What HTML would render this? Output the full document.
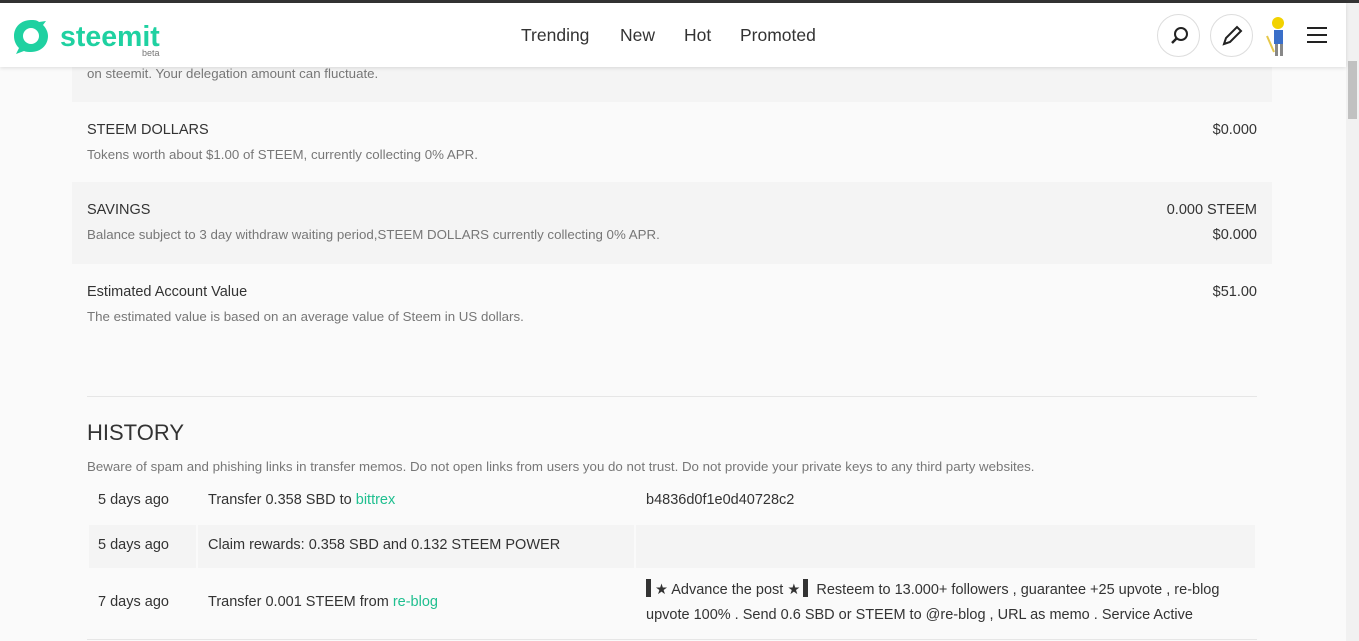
<!DOCTYPE html>
<html><head><meta charset="utf-8"><style>
*{margin:0;padding:0;box-sizing:border-box}
body{width:1359px;height:641px;overflow:hidden;background:#fafafa;font-family:"Liberation Sans",sans-serif;color:#333;position:relative}
.topbar{position:absolute;top:0;left:0;width:1359px;height:3px;background:#333}
.hdr{position:absolute;top:3px;left:0;width:1346px;height:64px;background:#fff;box-shadow:0 1px 4px rgba(0,0,0,.12);z-index:5}
.sb{position:absolute;top:3px;right:0;width:13px;height:638px;background:#f1f1f1}
.sb div{position:absolute;top:58px;left:2px;width:9px;height:58px;background:#c1c1c1}
.logo{position:absolute;left:12px;top:15px}
.brand{position:absolute;left:60px;top:18px;font-size:28.5px;font-weight:bold;color:#1fd1a1}
.beta{position:absolute;left:142px;top:45px;font-size:9px;color:#777}
.nav{position:absolute;top:22px;font-size:17.5px;color:#333}
.circ{position:absolute;top:11px;width:43px;height:43px;border:1px solid #ddd;border-radius:50%}
.row{position:absolute;left:72px;width:1200px}
.t{position:absolute;left:15px;font-size:14.5px;color:#333}
.s{position:absolute;left:15px;font-size:13.3px;color:#777}
.r{position:absolute;right:15px;font-size:14.5px;color:#333}
.cell{position:absolute;font-size:14.5px;color:#333}
a{color:#1fbf8f;text-decoration:none}
</style></head><body>
<div class="topbar"></div>
<div class="row" style="top:60px;height:42px;background:#f4f4f4"><div class="s" style="top:6px">on steemit. Your delegation amount can fluctuate.</div></div>
<div class="row" style="top:102px;height:80px;background:#fafafa"><div class="t" style="top:20px">STEEM DOLLARS</div><div class="s" style="top:45px">Tokens worth about $1.00 of STEEM, currently collecting 0% APR.</div><div class="r" style="top:20px">$0.000</div></div>
<div class="row" style="top:182px;height:82px;background:#f4f4f4"><div class="t" style="top:20px">SAVINGS</div><div class="s" style="top:45px">Balance subject to 3 day withdraw waiting period,STEEM DOLLARS currently collecting 0% APR.</div><div class="r" style="top:20px">0.000 STEEM</div><div class="r" style="top:45px">$0.000</div></div>
<div class="row" style="top:264px;height:80px"><div class="t" style="top:20px">Estimated Account Value</div><div class="s" style="top:45px">The estimated value is based on an average value of Steem in US dollars.</div><div class="r" style="top:20px">$51.00</div></div>
<div style="position:absolute;left:87px;top:396px;width:1170px;height:1px;background:#e6e6e6"></div>
<div style="position:absolute;left:87px;top:420px;font-size:22px;color:#333">HISTORY</div>
<div class="s" style="left:87px;top:459px">Beware of spam and phishing links in transfer memos. Do not open links from users you do not trust. Do not provide your private keys to any third party websites.</div>
<div style="position:absolute;left:89px;top:525px;width:107px;height:43px;background:#f4f4f4"></div>
<div style="position:absolute;left:198px;top:525px;width:436px;height:43px;background:#f4f4f4"></div>
<div style="position:absolute;left:636px;top:525px;width:619px;height:43px;background:#f4f4f4"></div>
<div class="cell" style="left:98px;top:492px">5 days ago</div>
<div class="cell" style="left:208px;top:492px">Transfer 0.358 SBD to <a>bittrex</a></div>
<div class="cell" style="left:646px;top:492px">b4836d0f1e0d40728c2</div>
<div class="cell" style="left:98px;top:537px">5 days ago</div>
<div class="cell" style="left:208px;top:537px">Claim rewards: 0.358 SBD and 0.132 STEEM POWER</div>
<div class="cell" style="left:98px;top:594px">7 days ago</div>
<div class="cell" style="left:208px;top:594px">Transfer 0.001 STEEM from <a>re-blog</a></div>
<div class="cell" style="left:646px;top:578px;width:600px;line-height:25px"><span style="display:inline-block;width:5px;height:18px;background:#333;vertical-align:-3px"></span> ★ Advance the post ★<span style="display:inline-block;width:5px;height:18px;background:#333;vertical-align:-3px;margin-left:3px"></span>&nbsp; Resteem to 13.000+ followers , guarantee +25 upvote , re-blog upvote 100% . Send 0.6 SBD or STEEM to @re-blog , URL as memo . Service Active</div>
<div style="position:absolute;left:87px;top:639px;width:1170px;height:1px;background:#e6e6e6"></div>
<div class="hdr">
<svg class="logo" width="38" height="38" viewBox="0 0 38 38"><path d="M19 2C9 2 2 9 2 18c0 5 2 9 5 12l-3 6 8-3c2 1 5 1 7 1 10 0 17-7 17-16 0-4-2-8-5-11l3-4-7 1C25 2 22 2 19 2z" fill="#1fd1a1"/><circle cx="19" cy="18" r="8" fill="#fff"/></svg>
<div class="brand">steemit</div><div class="beta">beta</div>
<div class="nav" style="left:521px">Trending</div>
<div class="nav" style="left:620px">New</div>
<div class="nav" style="left:684px">Hot</div>
<div class="nav" style="left:740px">Promoted</div>
<div class="circ" style="left:1157px"><svg width="43" height="43" viewBox="0 0 43 43"><circle cx="23" cy="19" r="6" fill="none" stroke="#222" stroke-width="2"/><line x1="19" y1="23" x2="14" y2="28" stroke="#222" stroke-width="2.5"/></svg></div>
<div class="circ" style="left:1210px"><svg width="43" height="43" viewBox="0 0 43 43"><path d="M13 29l2-6 11-11 4 4-11 11z" fill="none" stroke="#222" stroke-width="2"/></svg></div>
<svg style="position:absolute;left:1265px;top:13px" width="26" height="42" viewBox="0 0 26 42"><circle cx="13" cy="7" r="6" fill="#f2d200"/><rect x="9" y="14" width="9" height="14" fill="#3a6fc9"/><rect x="10" y="28" width="3" height="12" fill="#888"/><rect x="15" y="28" width="3" height="12" fill="#888"/><line x1="2" y1="20" x2="9" y2="36" stroke="#e6c84a" stroke-width="2"/></svg>
<div style="position:absolute;left:1307px;top:24px;width:20px;height:2px;background:#222"></div>
<div style="position:absolute;left:1307px;top:31px;width:20px;height:2px;background:#222"></div>
<div style="position:absolute;left:1307px;top:38px;width:20px;height:2px;background:#222"></div>
</div>
<div class="sb"><div></div></div>
</body></html>
